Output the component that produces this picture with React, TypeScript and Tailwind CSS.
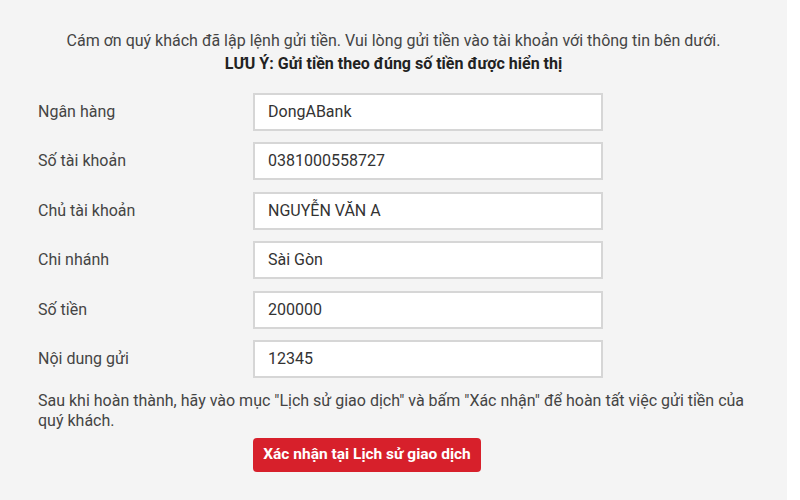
import React from 'react';

const rows: [string, string][] = [
  ['Ngân hàng', 'DongABank'],
  ['Số tài khoản', '0381000558727'],
  ['Chủ tài khoản', 'NGUYỄN VĂN A'],
  ['Chi nhánh', 'Sài Gòn'],
  ['Số tiền', '200000'],
  ['Nội dung gửi', '12345'],
];

export default function App() {
  return (
    <div className="w-[800px] h-[500px] bg-white" style={{ fontFamily: 'Roboto, "Noto Sans", sans-serif' }}>
      <div className="w-[787px] h-[500px] bg-[#f4f4f4] pt-[29px] text-[16px]">
        {/* Intro */}
        <p className="text-center leading-[23px] text-[#444]">
          Cám ơn quý khách đã lập lệnh gửi tiền. Vui lòng gửi tiền vào tài khoản với thông tin bên dưới.
        </p>
        <p className="text-center leading-[23px] font-bold text-[#222]">
          LƯU Ý: Gửi tiền theo đúng số tiền được hiển thị
        </p>

        {/* Fields */}
        <div className="mt-[18px] pl-[38px] flex flex-col gap-[11.4px]">
          {rows.map(([label, value]) => (
            <div key={label} className="flex items-center">
              <div className="w-[215px] text-[#444]">{label}</div>
              <div className="w-[350px] h-[38px] bg-white border-2 border-[#d6d6d6] flex items-center px-[13px] text-[#333]">
                {value}
              </div>
            </div>
          ))}
        </div>

        {/* Note */}
        <p className="mt-[13px] pl-[38px] pr-[30px] leading-[20px] text-[#444]">
          Sau khi hoàn thành, hãy vào mục "Lịch sử giao dịch" và bấm "Xác nhận" để hoàn tất việc gửi tiền của quý khách.
        </p>

        <div className="mt-[7px] pl-[253px]">
          <button className="w-[228px] h-[34px] rounded-[4px] bg-[#d7202b] text-white font-bold text-[15.5px]">
            Xác nhận tại Lịch sử giao dịch
          </button>
        </div>
      </div>
    </div>
  );
}
